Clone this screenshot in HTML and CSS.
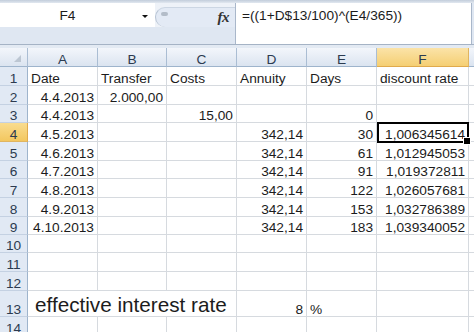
FILE: index.html
```html
<!DOCTYPE html>
<html>
<head>
<meta charset="utf-8">
<link rel="stylesheet" href="styles.css">
</head>
<body>
<div class="topline"></div>
<div class="fbar">
  <div class="fleft">
    <div class="nrow">
      <div class="namebox"><span class="ref">F4</span><span class="dd"></span></div>
      <div class="fxzone"><span class="knob"></span><span class="fx">fx</span></div>
    </div>
    <div class="lower"></div>
  </div>
  <div class="formula">=((1+D$13/100)^(E4/365))</div>
</div>
<div class="gap"></div>
<div class="sheet">
  <div class="hd corner"><span class="tri"></span></div><div class="hd">A</div><div class="hd">B</div><div class="hd">C</div><div class="hd">D</div><div class="hd">E</div><div class="hd sel">F</div><div class="hd"></div>

  <div class="rh">1</div><div>Date</div><div>Transfer</div><div>Costs</div><div>Annuity</div><div>Days</div><div>discount rate</div><div></div>
  <div class="rh">2</div><div class="r">4.4.2013</div><div class="r">2.000,00</div><div></div><div></div><div></div><div></div><div></div>
  <div class="rh">3</div><div class="r">4.4.2013</div><div></div><div class="r">15,00</div><div></div><div class="r">0</div><div></div><div></div>
  <div class="rh rsel">4</div><div class="r">4.5.2013</div><div></div><div></div><div class="r">342,14</div><div class="r">30</div><div class="r cur">1,006345614</div><div></div>
  <div class="rh">5</div><div class="r">4.6.2013</div><div></div><div></div><div class="r">342,14</div><div class="r">61</div><div class="r">1,012945053</div><div></div>
  <div class="rh">6</div><div class="r">4.7.2013</div><div></div><div></div><div class="r">342,14</div><div class="r">91</div><div class="r">1,019372811</div><div></div>
  <div class="rh">7</div><div class="r">4.8.2013</div><div></div><div></div><div class="r">342,14</div><div class="r">122</div><div class="r">1,026057681</div><div></div>
  <div class="rh">8</div><div class="r">4.9.2013</div><div></div><div></div><div class="r">342,14</div><div class="r">153</div><div class="r">1,032786389</div><div></div>
  <div class="rh">9</div><div class="r">4.10.2013</div><div></div><div></div><div class="r">342,14</div><div class="r">183</div><div class="r">1,039340052</div><div></div>
  <div class="rh">10</div><div></div><div></div><div></div><div></div><div></div><div></div><div></div>
  <div class="rh">11</div><div></div><div></div><div></div><div></div><div></div><div></div><div></div>
  <div class="rh">12</div><div></div><div></div><div></div><div></div><div></div><div></div><div></div>
  <div class="rh">13</div><div class="big span3">effective interest rate</div><div class="r">8</div><div>%</div><div></div><div></div>
  <div class="rh">14</div><div></div><div></div><div></div><div></div><div></div><div></div><div></div>
</div>
</body>
</html>
```
FILE: styles.css
```css
* { box-sizing: border-box; margin: 0; padding: 0; }
html, body { width: 474px; height: 332px; overflow: hidden; }
body {
  background: #fff;
  font-family: "Liberation Sans", Arial, sans-serif;
  font-size: 13.7px;
  color: #1c1c1c;
}
.topline { height: 3px; background: linear-gradient(#c2cddb, #e2e8f0); }
.fbar { display: flex; height: 41px; background: #dfe7f2; }
.fleft { width: 235px; display: flex; flex-direction: column; }
.nrow { display: flex; height: 24px; background: #eef2f8; }
.namebox { width: 155px; background: #fff; display: flex; align-items: flex-start; }
.ref { width: 135px; text-align: center; line-height: 16px; margin-top: 5px; }
.dd {
  width: 0; height: 0;
  border-left: 3px solid transparent;
  border-right: 3px solid transparent;
  border-top: 3px solid #111;
  margin-left: 7px; margin-top: 12px;
}
.fxzone {
  flex: 1;
  margin-top: 4px;
  display: flex;
  align-items: center;
  justify-content: space-between;
  background: #e3eaf5;
  border-radius: 10px 0 0 10px;
  border-left: 1px solid #b7c3d3;
  border-top: 1px solid #ccd6e3;
}
.knob { width: 7px; height: 4px; border-radius: 3px; background: #b3bcc8; margin-left: 5px; margin-top: -8px; }
.fx {
  font-family: "Liberation Serif", "Times New Roman", serif;
  font-style: italic; font-weight: bold;
  font-size: 15px; color: #333;
  margin-right: 6px; letter-spacing: -0.5px;
}
.lower { flex: 1; background: #dfe7f2; }
.formula {
  flex: 1;
  background: #fff;
  border-left: 1px solid #a9b7ca;
  border-right: 1px solid #a9b7ca;
  margin-right: 2px;
  padding: 5px 0 0 6px;
  line-height: 16px;
  white-space: nowrap;
}
.gap { height: 4px; border-top: 1px solid #a5b3c5; background: #e3eaf3; }
.sheet {
  display: grid;
  grid-template-columns: 28px 70px 69px 70px 70px 70px 92px 1fr;
  grid-template-rows: 19px 19px 19px 18px 19px 19px 18px 19px 19px 18px 18px 19px 19px 26px 19px;
}
.sheet > div {
  border-right: 1px solid #d6dadf;
  border-bottom: 1px solid #d6dadf;
  display: flex;
  align-items: flex-end;
  padding: 0 3px;
  line-height: 13px;
  white-space: nowrap;
}
.sheet > .r { justify-content: flex-end; }
.sheet > .hd {
  background: linear-gradient(#f3f6fb, #dbe4f0);
  border-right-color: #aabdd3;
  border-bottom-color: #9eb4cc;
  justify-content: center;
  color: #2c3b50;
  line-height: 12px;
}
.sheet > .corner { justify-content: flex-end; padding: 0 6px 4px 0; }
.tri {
  width: 0; height: 0;
  border-left: 7px solid transparent;
  border-bottom: 7px solid #bcc6d2;
}
.sheet > .rh {
  background: #e1e9f4;
  border-right-color: #9eb4cc;
  border-bottom-color: #c4d1e2;
  justify-content: center;
  color: #2c3b50;
  padding: 0;
}
.sheet > .sel {
  background: linear-gradient(#fbe3a8, #f5cf73);
  border-bottom-color: #e0aa4c;
  border-right-color: #e0b560;
}
.sheet > .rsel {
  background: linear-gradient(#f9dc8f, #f3c75f);
  border-right-color: #e0aa4c;
  border-bottom-color: #e0b560;
}
.sheet > .span3 { grid-column: span 3; }
.sheet > .big { font-size: 20.7px; line-height: 22px; padding-left: 7px; }
.cur { position: relative; }
.cur::before {
  content: "";
  position: absolute;
  left: 0; top: -1px; right: -1px; bottom: -2px;
  border: 2px solid #000;
}
.cur::after {
  content: "";
  position: absolute;
  right: -3px; bottom: -4px;
  width: 6px; height: 6px;
  background: #000;
  border: 1px solid #fff;
}
```
